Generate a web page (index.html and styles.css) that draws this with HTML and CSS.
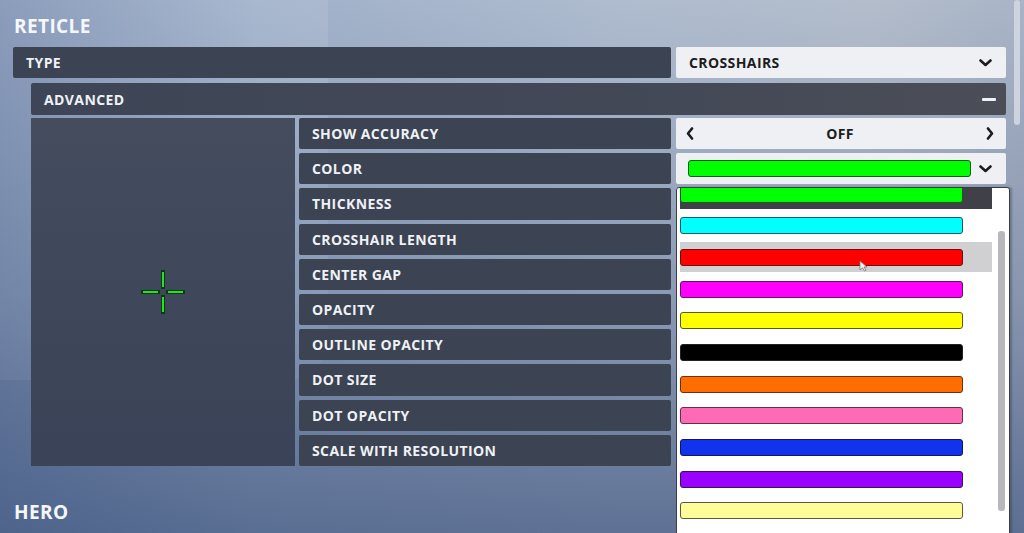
FILE: index.html
```html
<!DOCTYPE html>
<html lang="en">
<head>
  <meta charset="UTF-8" />
  <meta name="viewport" content="width=device-width, initial-scale=1" />
  <title>Reticle Settings</title>
  <link rel="stylesheet" href="styles.css">
</head>
<body>
  <div class="settings">
    <h2 class="section-title">RETICLE</h2>

    <div class="row">
      <div class="label">TYPE</div>
      <div class="control select">
        <span>CROSSHAIRS</span>
        <svg class="chevron" width="13" height="8" viewBox="0 0 13 8"><path d="M1.5 1.5 L6.5 6 L11.5 1.5" fill="none" stroke="#1b1d22" stroke-width="2.6" stroke-linecap="round" stroke-linejoin="round"/></svg>
      </div>
    </div>

    <div class="advanced">
      <div class="advanced-head">
        <span>ADVANCED</span>
        <span class="collapse"></span>
      </div>

      <div class="advanced-body">
        <div class="preview">
          <svg width="44" height="44" viewBox="0 0 44 44">
            <g stroke="#0d3a10" stroke-width="4" stroke-linecap="square">
              <path d="M22 2 V17 M22 27 V42 M2 22 H17 M27 22 H42"/>
            </g>
            <g stroke="#27e02b" stroke-width="2">
              <path d="M22 2 V17 M22 27 V42 M2 22 H17 M27 22 H42"/>
            </g>
          </svg>
        </div>

        <div class="options">
          <div class="row">
            <div class="label">SHOW ACCURACY</div>
            <div class="control toggle">
              <svg width="8" height="13" viewBox="0 0 8 13"><path d="M6 1.5 L2 6.5 L6 11.5" fill="none" stroke="#1b1d22" stroke-width="2.6" stroke-linecap="round" stroke-linejoin="round"/></svg>
              <span>OFF</span>
              <svg width="8" height="13" viewBox="0 0 8 13"><path d="M2 1.5 L6 6.5 L2 11.5" fill="none" stroke="#1b1d22" stroke-width="2.6" stroke-linecap="round" stroke-linejoin="round"/></svg>
            </div>
          </div>
          <div class="row">
            <div class="label">COLOR</div>
            <div class="control select color-select">
              <span class="swatch green"></span>
              <svg class="chevron" width="13" height="8" viewBox="0 0 13 8"><path d="M1.5 1.5 L6.5 6 L11.5 1.5" fill="none" stroke="#1b1d22" stroke-width="2.6" stroke-linecap="round" stroke-linejoin="round"/></svg>
            </div>
          </div>
          <div class="row"><div class="label">THICKNESS</div><div class="control"></div></div>
          <div class="row"><div class="label">CROSSHAIR LENGTH</div><div class="control"></div></div>
          <div class="row"><div class="label">CENTER GAP</div><div class="control"></div></div>
          <div class="row"><div class="label">OPACITY</div><div class="control"></div></div>
          <div class="row"><div class="label">OUTLINE OPACITY</div><div class="control"></div></div>
          <div class="row"><div class="label">DOT SIZE</div><div class="control"></div></div>
          <div class="row"><div class="label">DOT OPACITY</div><div class="control"></div></div>
          <div class="row"><div class="label">SCALE WITH RESOLUTION</div><div class="control"></div></div>
        </div>
      </div>
    </div>

    <h2 class="section-title hero">HERO</h2>
  </div>

  <!-- open color menu -->
  <div class="color-menu">
    <ul class="color-list">
      <li class="selected"><span class="swatch green"></span></li>
      <li><span class="swatch cyan"></span></li>
      <li class="hover"><span class="swatch red"></span>
        <svg class="cursor" width="9" height="12" viewBox="0 0 9 12"><path d="M1 1 L1 10 L3.5 7.8 L5.5 11 L7 10.2 L5 7 L8 7 Z" fill="#f4f4f4" stroke="#777" stroke-width="0.8"/></svg>
      </li>
      <li><span class="swatch magenta"></span></li>
      <li><span class="swatch yellow"></span></li>
      <li><span class="swatch black"></span></li>
      <li><span class="swatch orange"></span></li>
      <li><span class="swatch pink"></span></li>
      <li><span class="swatch blue"></span></li>
      <li><span class="swatch purple"></span></li>
      <li><span class="swatch pale"></span></li>
    </ul>
    <div class="scroll-thumb"></div>
  </div>

  <div class="page-scroll"></div>
</body>
</html>
```

FILE: styles.css
```css
body {
  margin: 0;
  height: 533px;
  overflow: hidden;
  font-family: "Open Sans", "Liberation Sans", sans-serif;
  font-weight: 700;
  color: #eef1f5;
  background:
    linear-gradient(180deg, rgba(170,185,208,0) 0%, rgba(72,92,130,0.35) 55%, rgba(60,82,124,0.7) 100%),
    linear-gradient(90deg, #7b8eb0 0%, #9fb0c9 25%, #afbccf 60%, #b3bdcc 85%, #a9b4c6 100%);
  position: relative;
}
/* faint panel shape behind the left column */
body::before {
  content: "";
  position: absolute;
  left: 0;
  top: -40px;
  width: 328px;
  height: 420px;
  border-radius: 0 40px 40px 0;
  background: linear-gradient(180deg, rgba(205,215,232,0.22), rgba(170,186,210,0.1));
}
.settings {
  position: relative;
  padding: 15px 18px 0 13px;
}
.section-title {
  margin: 0 0 10px 1px;
  font-size: 19px;
  line-height: 22px;
  letter-spacing: 0.4px;
  color: #f5f7fa;
}
.section-title.hero {
  margin-top: 35px;
}
.row {
  display: flex;
  gap: 5px;
  height: 31px;
}
.label {
  flex: 1;
  display: flex;
  align-items: center;
  padding-left: 13px;
  font-size: 14px;
  letter-spacing: 0.4px;
  background: #3c4353;
  border-radius: 2px;
}
.control {
  width: 330px;
  flex: none;
  background: #eef0f3;
  border-radius: 2px;
  color: #1b1d22;
  font-size: 14px;
  letter-spacing: 0.4px;
  display: flex;
  align-items: center;
  box-sizing: border-box;
}
.select {
  padding: 0 14px 0 13px;
  justify-content: space-between;
}
.toggle {
  padding: 0 12px 0 10px;
  justify-content: space-between;
}
.color-select {
  padding-left: 12px;
}
.color-select .swatch {
  width: 283px;
  height: 17px;
}
.advanced {
  margin: 5px 0 0 18px;
}
.advanced-head {
  height: 32px;
  display: flex;
  align-items: center;
  justify-content: space-between;
  padding: 0 10px 0 13px;
  font-size: 14px;
  letter-spacing: 0.4px;
  border-radius: 2px;
  background: linear-gradient(90deg, #3d4556 0%, #434857 60%, #4b4e57 100%);
}
.collapse {
  width: 14px;
  height: 3px;
  background: #eef1f5;
  border-radius: 1px;
}
.advanced-body {
  display: flex;
  gap: 4px;
  margin-top: 3px;
}
.preview {
  width: 264px;
  height: 348px;
  flex: none;
  background: linear-gradient(180deg, #444c5e 0%, #3a4357 100%);
  display: flex;
  align-items: center;
  justify-content: center;
}
.options {
  flex: 1;
  display: flex;
  flex-direction: column;
  gap: 4px;
}
.options .row {
  height: 31.2px;
}
.swatch {
  display: block;
  box-sizing: border-box;
  border: 1px solid #2a2a2a;
  border-radius: 3px;
}
.green { background: #00ff00; border-color: #1d5a1d; }
.cyan { background: #00ffff; border-color: #1a5c60; }
.red { background: #ff0000; border-color: #6a1010; }
.magenta { background: #ff00ff; border-color: #5c1a5c; }
.yellow { background: #ffff00; border-color: #5c5a1a; }
.black { background: #000000; border-color: #222; }
.orange { background: #ff6c00; border-color: #6a3010; }
.pink { background: #ff6ab5; border-color: #6a2a4a; }
.blue { background: #1233ee; border-color: #101a5a; }
.purple { background: #9a00ff; border-color: #3a105a; }
.pale { background: #fffd9a; border-color: #5c5a3a; }

/* dropdown menu lies on top of the rows */
.color-menu {
  position: absolute;
  left: 676px;
  top: 187px;
  width: 334px;
  height: 360px;
  box-sizing: border-box;
  background: #ffffff;
  border: 1px solid #3a3d44;
  border-radius: 3px;
  overflow: hidden;
  box-shadow: 2px 0 2px rgba(40,50,70,0.35);
}
.color-list {
  list-style: none;
  margin: -9px 0 0 3px;
  padding: 0;
}
.color-list li {
  position: relative;
  width: 312px;
  height: 30px;
  margin-bottom: 1.7px;
  display: flex;
  align-items: center;
}
.color-list li.selected {
  background: #404148;
}
.color-list li.hover {
  background: #d0d0d2;
}
.color-list .swatch {
  width: 283px;
  height: 17px;
}
.cursor {
  position: absolute;
  left: 179px;
  top: 18px;
}
.scroll-thumb {
  position: absolute;
  left: 321px;
  top: 43px;
  width: 7px;
  height: 280px;
  border-radius: 3px;
  background: #b8b8bc;
}
.page-scroll {
  position: absolute;
  left: 1014px;
  top: 0;
  width: 6px;
  height: 125px;
  border-radius: 3px;
  background: #cdd4df;
}
```
